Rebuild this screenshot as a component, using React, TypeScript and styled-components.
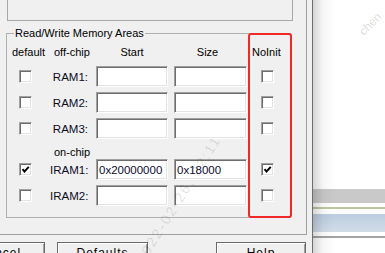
import React from 'react';
import styled, { createGlobalStyle } from 'styled-components';

type Area = {
	label: string;
	start: string;
	size: string;
	isDefault: boolean;
	noInit: boolean;
	gap: number;
};

const offChip: Area[] = [
	{ label: 'RAM1:', start: '', size: '', isDefault: false, noInit: false, gap: 7 },
	{ label: 'RAM2:', start: '', size: '', isDefault: false, noInit: false, gap: 5 },
	{ label: 'RAM3:', start: '', size: '', isDefault: false, noInit: false, gap: 5 },
];

const onChip: Area[] = [
	{ label: 'IRAM1:', start: '0x20000000', size: '0x18000', isDefault: true, noInit: true, gap: 0 },
	{ label: 'IRAM2:', start: '', size: '', isDefault: false, noInit: false, gap: 5 },
];

const CheckBox = ({ checked, offset }: { checked: boolean; offset: number }) => (
	<Box $offset={offset}>
		{checked && (
			<svg width="9" height="9" viewBox="0 0 9 9">
				<polyline points="1.5,4.2 3.5,6.5 7.8,1.8" fill="none" stroke="#000" strokeWidth="1.9" />
			</svg>
		)}
	</Box>
);

const AreaRow = ({ area }: { area: Area }) => (
	<Row $top={area.gap} $height={21}>
		<CheckBox checked={area.isDefault} offset={7} />
		<Label>{area.label}</Label>
		<Field $width={72} readOnly value={area.start} />
		<Field $width={73} readOnly value={area.size} />
		<CheckBox checked={area.noInit} offset={9} />
	</Row>
);

export default function App() {
	return (
		<>
			<GlobalStyle />
			<Screen>
				<Dialog>
					<TabPage>
						<TopPanel />
						<GroupBox>
							<Legend>Read/Write Memory Areas</Legend>
							<Row $top={0} $height={14}>
								<HeadCell>default</HeadCell>
								<HeadCell $pad={4}>off-chip</HeadCell>
								<HeadCell $center $width={72}>Start</HeadCell>
								<HeadCell $center $width={67}>Size</HeadCell>
								<HeadCell>NoInit</HeadCell>
							</Row>
							{offChip.map((a) => (
								<AreaRow key={a.label} area={a} />
							))}
							<Row $top={6} $height={14}>
								<span />
								<HeadCell $pad={4}>on-chip</HeadCell>
							</Row>
							{onChip.map((a) => (
								<AreaRow key={a.label} area={a} />
							))}
						</GroupBox>
						<Highlight />
					</TabPage>
					<ButtonRow>
						<Button $left={-46}>Cancel</Button>
						<Button $left={12}>Defaults</Button>
						<Button $left={68} $width={90}>Help</Button>
					</ButtonRow>
				</Dialog>
				<Backdrop>
					<Stripe $top={189} $height={14} $bg="#c9c9c9" />
					<Stripe $top={4} $height={2} $bg="#bcc99e" />
					<Stripe $top={5} $height={18} $bg="linear-gradient(#bccddf, #d2dde9)" />
					<Stripe $top={4} $height={2} $bg="#a4a4a4" />
				</Backdrop>
				<Watermark>2022-02-26, 22:11</Watermark>
				<CornerMark>chen</CornerMark>
			</Screen>
		</>
	);
}

const GlobalStyle = createGlobalStyle`
	html, body {
		margin: 0;
		padding: 0;
		background: #ffffff;
		overflow: hidden;
	}
`;

const Screen = styled.div`
	width: 385px;
	height: 253px;
	display: flex;
	position: relative;
	overflow: hidden;
	font-family: 'Liberation Sans', Arial, sans-serif;
	font-size: 11px;
	color: #0c0c24;
`;

const Dialog = styled.div`
	width: 313px;
	flex-shrink: 0;
	box-sizing: border-box;
	background: #f0f0f0;
	border-right: 1px solid #6e6e6e;
	display: flex;
	flex-direction: column;
`;

const TabPage = styled.div`
	width: 307px;
	height: 235px;
	flex-shrink: 0;
	box-sizing: border-box;
	border-right: 1px solid #a0a0a0;
	border-bottom: 1px solid #a0a0a0;
	position: relative;
	display: flex;
	flex-direction: column;
`;

const TopPanel = styled.div`
	margin: -10px 0 0 7px;
	width: 286px;
	height: 31px;
	flex-shrink: 0;
	box-sizing: border-box;
	border: 1px solid #a8a8a8;
`;

const GroupBox = styled.div`
	margin: 12px 0 0 6px;
	width: 285px;
	height: 185px;
	flex-shrink: 0;
	box-sizing: border-box;
	border: 1px solid #b0b0b0;
	padding: 11px 0 0 5px;
	position: relative;
	display: flex;
	flex-direction: column;
`;

const Legend = styled.span`
	position: absolute;
	top: -7px;
	left: 7px;
	padding: 0 1px;
	line-height: 13px;
	background: #f0f0f0;
	color: #000;
`;

const Row = styled.div<{ $top: number; $height: number }>`
	display: grid;
	grid-template-columns: 38px 46px 78px 78px 30px;
	align-items: center;
	flex-shrink: 0;
	margin-top: ${(p) => p.$top}px;
	height: ${(p) => p.$height}px;
`;

const HeadCell = styled.span<{ $pad?: number; $center?: boolean; $width?: number }>`
	padding-left: ${(p) => p.$pad ?? 0}px;
	text-align: ${(p) => (p.$center ? 'center' : 'left')};
	width: ${(p) => (p.$width ? `${p.$width}px` : 'auto')};
	line-height: 14px;
	white-space: nowrap;
	color: #000;
`;

const Label = styled.span`
	text-align: right;
	padding-right: 8px;
	white-space: nowrap;
	font-size: 11.5px;
`;

const Field = styled.input<{ $width: number }>`
	width: ${(p) => p.$width}px;
	height: 21px;
	box-sizing: border-box;
	margin: 0;
	padding: 0 2px;
	border: 1px solid;
	border-color: #a0a0a0 #ffffff #ffffff #a0a0a0;
	box-shadow: inset 1px 1px 0 #6d6d6d, inset -1px -1px 0 #e3e3e3;
	background: #ffffff;
	font-family: 'Liberation Sans', Arial, sans-serif;
	font-size: 11.5px;
	color: #0c0c30;
	outline: none;
`;

const Box = styled.span<{ $offset: number }>`
	width: 13px;
	height: 13px;
	margin-left: ${(p) => p.$offset}px;
	box-sizing: border-box;
	border: 1px solid;
	border-color: #a0a0a0 #ffffff #ffffff #a0a0a0;
	box-shadow: inset 1px 1px 0 #6d6d6d, inset -1px -1px 0 #e3e3e3;
	background: #ffffff;
	display: flex;
	align-items: center;
	justify-content: center;
`;

const Highlight = styled.div`
	position: absolute;
	left: 248px;
	top: 33px;
	width: 44px;
	height: 185px;
	box-sizing: border-box;
	border: 2px solid #f02828;
	border-radius: 3px;
	pointer-events: none;
`;

const ButtonRow = styled.div`
	display: flex;
	flex-shrink: 0;
	margin-top: 7px;
`;

const Button = styled.div<{ $left: number; $width?: number }>`
	flex-shrink: 0;
	margin-left: ${(p) => p.$left}px;
	width: ${(p) => p.$width ?? 91}px;
	height: 24px;
	box-sizing: border-box;
	padding-top: 3px;
	border: 1px solid #6a6a6a;
	box-shadow: inset 1px 1px 0 #ffffff, inset -1px -1px 0 #a0a0a0;
	background: #f0f0f0;
	text-align: center;
	line-height: 14px;
	font-size: 12px;
	letter-spacing: 1px;
	color: #000;
`;

const Backdrop = styled.div`
	flex: 1;
	position: relative;
	background: #ffffff;
	display: flex;
	flex-direction: column;

	&::after {
		content: '';
		position: absolute;
		inset: 0;
		background: linear-gradient(to right, rgba(0, 0, 0, 0.16), rgba(0, 0, 0, 0.04) 10px, rgba(0, 0, 0, 0) 22px);
		pointer-events: none;
	}
`;

const Stripe = styled.div<{ $top: number; $height: number; $bg: string }>`
	flex-shrink: 0;
	margin-top: ${(p) => p.$top}px;
	height: ${(p) => p.$height}px;
	background: ${(p) => p.$bg};
`;

const Watermark = styled.div`
	position: absolute;
	left: 146px;
	top: 250px;
	transform-origin: 0 100%;
	transform: rotate(-58deg);
	font-size: 14px;
	letter-spacing: 2px;
	white-space: nowrap;
	color: rgba(0, 0, 0, 0.12);
	pointer-events: none;
`;

const CornerMark = styled.div`
	position: absolute;
	left: 366px;
	top: 24px;
	transform-origin: 0 100%;
	transform: rotate(-45deg);
	font-size: 12px;
	white-space: nowrap;
	color: rgba(0, 0, 0, 0.16);
	pointer-events: none;
`;
